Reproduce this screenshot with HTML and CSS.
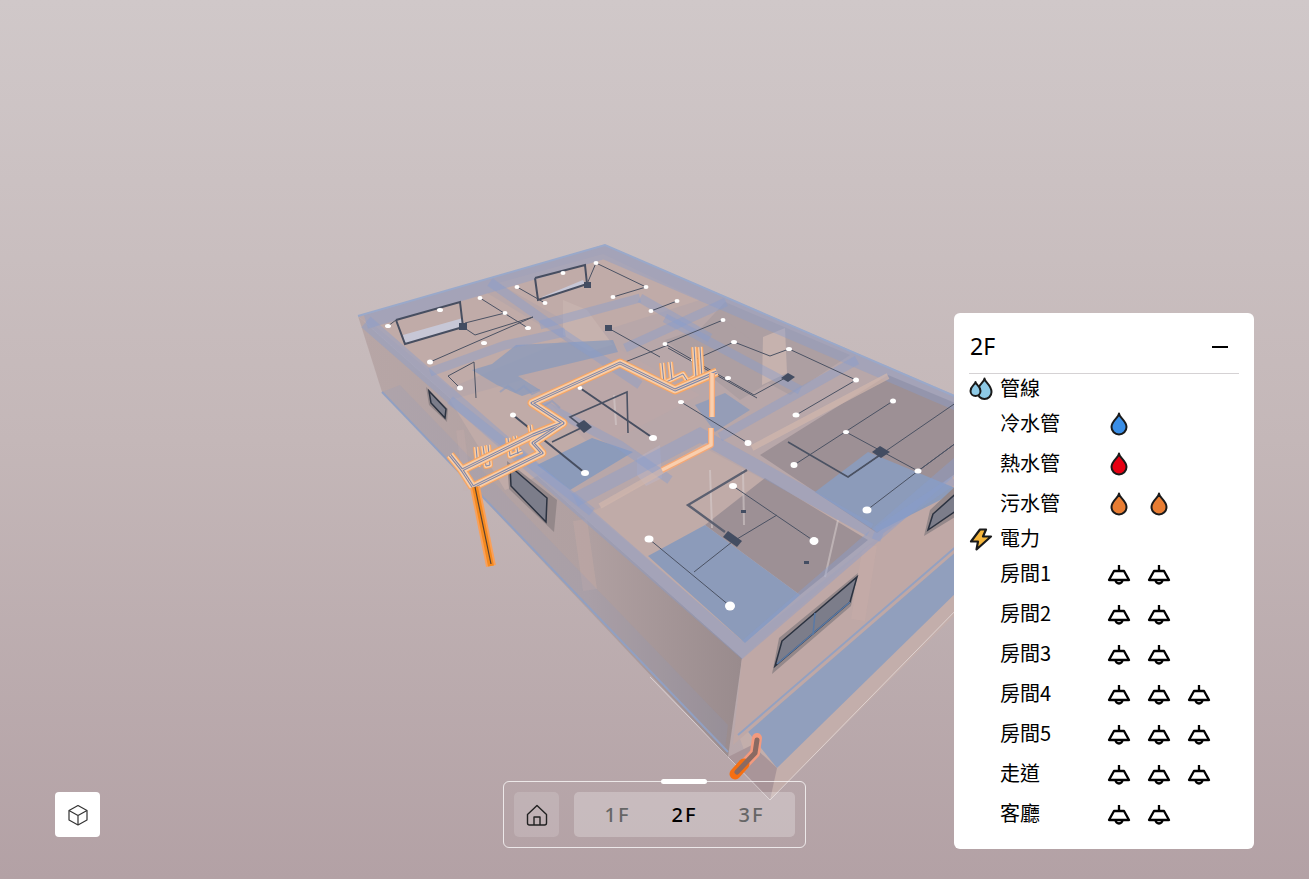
FILE: index.html

```html
<!DOCTYPE html>
<html lang="zh-Hant">
<head>
  <meta charset="UTF-8" />
  <meta name="viewport" content="width=device-width, initial-scale=1.0" />
  <title>2F 管線與電力</title>
  <link rel="stylesheet" href="styles.css">
</head>
<body>
  <svg width="0" height="0" class="defs">
    <defs>
      <linearGradient id="wall-left-fill" x1="0" y1="0" x2="1" y2="0">
        <stop offset="0" stop-color="#b7a6a6"/>
        <stop offset="0.6" stop-color="#b0a0a1"/>
        <stop offset="1" stop-color="#998b8d"/>
      </linearGradient>
      <g id="pipe-main">
        <polyline points="450,455 462,470 533,435 563,423 532,403 620,363 675,390 717,372"/>
        <polyline points="473,487 542,453 533,443 563,423"/>
        <polyline points="462,470 473,487"/>
      </g>
      <g id="pipe-risers">
        <polyline points="476,447 478,467"/>
        <polyline points="483,446 486,466 490,465 488,445"/>
        <polyline points="508,438 510,456 522,451"/>
        <polyline points="515,436 518,454"/>
        <polyline points="530,425 533,443"/>
        <polyline points="662,363 664,383 683,374 690,385"/>
        <polyline points="670,362 672,380"/>
        <polyline points="694,347 696,378"/>
        <polyline points="700,347 702,378"/>
        <polyline points="672,390 697,376"/>
      </g>
      <g id="pipe-right">
        <polyline points="712,373 712,417"/>
        <polyline points="711,428 711,445 662,470"/>
      </g>
    </defs>
    <symbol id="drop" viewBox="0 0 18 24">
      <path d="M9 1.500C9 5.500 16.500 8.500 16.500 15a7.500 7.500 0 0 1-15 0C1.500 8.500 9 5.500 9 1.500z" stroke="#1a1a1a" stroke-width="2" stroke-linejoin="round"/>
    </symbol>
    <symbol id="lamp" viewBox="0 0 24 21">
      <path d="M12 1v6M7 7h10l5 9H2zM8.500 16a3.500 3.500 0 0 0 7 0" fill="none" stroke="#000" stroke-width="2.300" stroke-linejoin="round"/>
    </symbol>
  </svg>

  <div class="viewer">
    <svg class="scene" viewBox="0 0 1309 879" width="1309" height="879">
      <!-- ground around the building -->
      <polygon class="g-pink" points="735,725 1010,500 1010,560 770,800 752,772"/>
      <polygon class="g-blue" points="745,728 1010,500 1010,540 777,768"/>
      <polygon class="g-dark" points="728,757 752,745 777,768 770,800"/>
      <polyline class="g-line" points="650,677 770,800 1010,555"/>

      <!-- outer walls -->
      <polygon class="wall-left" points="358,316 382,392 728,757 742,658"/>
      <polygon class="wall-right" points="742,658 733,745 1010,505 1010,415"/>
      <polyline class="edge-blue" points="382,392 728,752"/>
      <polyline class="edge-blue" points="738,735 1010,500"/>
      <line class="wall-strip" x1="580" y1="520" x2="590" y2="590"/>
      <line class="wall-strip2" x1="460" y1="430" x2="468" y2="490"/>
      <line class="wall-strip" x1="870" y1="545" x2="858" y2="620"/>
      <polygon class="wall-band" points="382,392 725,750 728,725 400,385"/>

      <!-- top of the model -->
      <polygon class="top" points="358,316 605,245 1010,420 742,658"/>

      <!-- room floors -->
      <polygon class="f-pink" points="375,326 487,293 565,340 450,388"/>
      <polygon class="f-pink" points="498,283 603,254 700,300 590,335"/>
      <polygon class="f-pale" points="563,300 587,310 613,345 590,352 563,335"/>
      <polygon class="f-pink" points="450,400 540,375 620,430 530,480 505,490"/>
      <polygon class="f-pink2" points="520,372 612,345 700,395 595,450"/>
      <polygon class="f-grey" points="725,302 850,355 790,395 690,340"/>
      <polygon class="f-grey" points="665,340 725,320 790,370 740,400"/>
      <polygon class="f-pale" points="763,337 785,328 787,373 762,385"/>
      <polygon class="f-pink" points="592,512 705,448 875,540 745,643"/>
      <polygon class="f-grey2" points="705,525 765,478 868,540 800,595"/>
      <polygon class="f-blue" points="648,556 705,525 800,595 745,643"/>
      <polygon class="f-grey2" points="760,455 888,375 960,405 960,470 877,533"/>
      <polygon class="f-blue" points="815,492 868,452 960,490 877,532"/>
      <polygon class="f-blue" points="537,465 592,438 633,452 570,490"/>
      <polygon class="f-blue soft" points="472,370 492,364 516,345 613,340 618,352 518,376 540,390 522,396 497,385"/>
      <polygon class="f-blue soft" points="695,405 725,393 750,410 715,432"/>
      <polygon class="f-light" points="403,335 463,318 463,327 405,344"/>
      <polygon class="f-light" points="542,297 583,280 585,284 541,300"/>

      <!-- stairs and pale partitions seen through the walls -->
      <polyline class="stairs" points="500,392 508,386 516,392 524,386 532,394 540,390"/>
      <polyline class="stairs" points="528,405 536,400 544,406 552,401 560,408"/>
      <polygon class="pale-col" points="637,458 660,445 662,478 646,486 637,475"/>
      <line class="pale-line" x1="710" y1="470" x2="712" y2="528"/>
      <line class="pale-line" x1="743" y1="470" x2="744" y2="525"/>
      <line class="pale-line" x1="838" y1="520" x2="825" y2="577"/>
      <line class="pale-line" x1="614" y1="395" x2="616" y2="425"/>

      <!-- translucent wall tops -->
      <g class="walls">
        <polyline class="w14" points="366,322 604,252 960,405"/>
        <polyline class="w14" points="366,322 742,650 960,462"/>
        <polyline class="w10" points="490,282 565,335 640,385"/>
        <polyline class="w10" points="430,372 505,345 565,332"/>
        <polyline class="w10" points="540,325 640,298"/>
        <polyline class="w10" points="640,298 710,338"/>
        <polyline class="w10" points="625,348 726,302"/>
        <polyline class="w10" points="665,318 800,390"/>
        <polyline class="w14" points="575,500 700,435 870,530"/>
        <polyline class="w10" points="720,437 857,360"/>
        <polyline class="w10" points="450,400 592,512"/>
        <polyline class="w10" points="876,540 880,530 954,480"/>
        <polyline class="w10" points="535,400 620,445 670,480"/>
      </g>
      <polyline class="w-pink" points="600,506 708,445"/>
      <polyline class="w-pink" points="752,448 888,376"/>
      <polyline class="edge-out" points="358,316 605,245 1010,420"/>

      <!-- windows -->
      <polygon class="win-reveal" points="426,387 448,409 447,422 429,405"/>
      <polygon class="win-pane" points="429,391 446,409 445,418 431,403"/>
      <polygon class="win-reveal" points="507,461 557,500 554,532 509,489"/>
      <polygon class="win-pane" points="510,466 547,498 546,522 511,486"/>
      <polygon class="win-reveal" points="779,638 858,573 851,606 772,674"/>
      <polygon class="win-pane" points="782,641 857,577 850,602 775,666"/>
      <line class="win-bar" x1="815" y1="613" x2="813" y2="635"/>
      <line class="win-bar" x1="777" y1="664" x2="850" y2="602"/>
      <polygon class="win-reveal" points="930,510 960,482 960,514 924,536"/>
      <polygon class="win-pane" points="933,514 960,490 960,508 928,530"/>

      <!-- wiring -->
      <g class="wires">
        <polyline class="w-thick" points="396,320 460,302 463,327 405,344 396,320"/>
        <polyline class="w-thick" points="535,278 585,265 587,284 538,300 535,278"/>
        <polyline points="430,362 533,317"/>
        <polyline points="463,327 475,335 533,317"/>
        <polyline points="465,323 505,313"/>
        <polyline points="480,298 528,328"/>
        <polyline points="388,326 396,320"/>
        <polyline points="460,388 448,376 474,362 476,398"/>
        <polyline points="517,287 545,303"/>
        <polyline points="587,284 596,263 646,287 613,297"/>
        <polyline points="608,328 660,357"/>
        <polyline points="620,364 668,345"/>
        <polyline class="w-thick" points="580,388 653,438"/>
        <polyline class="w-thick" points="513,415 585,473"/>
        <polyline class="w-mid" points="552,442 583,427 570,417 627,392 628,433"/>
        <polyline points="677,301 651,311"/>
        <polyline points="723,320 665,344 754,395 787,377"/>
        <polyline points="668,348 757,398"/>
        <polyline points="694,360 734,342 770,356 789,349 856,380 796,415"/>
        <polyline points="681,402 748,443"/>
        <polyline points="893,401 794,465"/>
        <polyline points="846,432 918,471 960,440"/>
        <polyline class="w-mid" points="788,442 848,477 880,455"/>
        <polyline points="848,477 960,400"/>
        <polyline points="733,486 814,541"/>
        <polyline points="649,539 730,606"/>
        <polyline points="694,572 732,542 777,515"/>
        <polyline points="867,510 918,471 960,440"/>
        <polyline class="w-double" points="725,532 688,505 747,470"/>
      </g>
      <g class="boxes">
        <rect x="459" y="323" width="8" height="7"/>
        <rect x="584" y="282" width="7" height="6"/>
        <rect x="605" y="325" width="7" height="6"/>
        <polygon points="576,425 584,420 592,427 584,433"/>
        <polygon points="781,378 788,373 795,377 788,382"/>
        <polygon points="872,452 880,446 890,452 881,458"/>
        <polygon points="723,537 728,531 742,541 737,547"/>
        <rect x="804" y="561" width="5" height="3"/>
        <rect x="741" y="510" width="5" height="3"/>
      </g>
      <g class="dots">
        <ellipse cx="388" cy="326" rx="3" ry="2"/><ellipse cx="440" cy="310" rx="3" ry="2"/>
        <ellipse cx="480" cy="298" rx="2.5" ry="2"/><ellipse cx="505" cy="313" rx="2.5" ry="2"/>
        <ellipse cx="528" cy="328" rx="3" ry="2"/><ellipse cx="484" cy="343" rx="3" ry="2"/>
        <ellipse cx="430" cy="362" rx="3" ry="2.5"/><ellipse cx="460" cy="388" rx="3" ry="2.5"/>
        <ellipse cx="517" cy="287" rx="2.5" ry="2"/><ellipse cx="545" cy="303" rx="2.5" ry="2"/>
        <ellipse cx="563" cy="273" rx="2.5" ry="2"/><ellipse cx="596" cy="263" rx="2.5" ry="2"/>
        <ellipse cx="646" cy="287" rx="2.5" ry="2"/><ellipse cx="613" cy="297" rx="2.5" ry="2"/>
        <ellipse cx="651" cy="311" rx="2.5" ry="2"/><ellipse cx="677" cy="301" rx="2.5" ry="2"/>
        <ellipse cx="620" cy="364" rx="3" ry="2.5"/><ellipse cx="580" cy="388" rx="2.5" ry="2"/>
        <ellipse cx="513" cy="415" rx="3" ry="2.5"/><ellipse cx="585" cy="473" rx="4" ry="3"/>
        <ellipse cx="653" cy="438" rx="4" ry="3"/><ellipse cx="723" cy="320" rx="2.5" ry="2"/>
        <ellipse cx="665" cy="344" rx="2.5" ry="2"/><ellipse cx="734" cy="342" rx="3" ry="2"/>
        <ellipse cx="789" cy="349" rx="3" ry="2"/><ellipse cx="856" cy="380" rx="3" ry="2.5"/>
        <ellipse cx="796" cy="415" rx="3.5" ry="2.5"/><ellipse cx="728" cy="378" rx="3" ry="2"/>
        <ellipse cx="694" cy="360" rx="3" ry="2"/><ellipse cx="681" cy="402" rx="3" ry="2"/>
        <ellipse cx="748" cy="443" rx="3.5" ry="3"/><ellipse cx="893" cy="401" rx="3" ry="2.5"/>
        <ellipse cx="846" cy="432" rx="3" ry="2"/><ellipse cx="794" cy="465" rx="3.5" ry="3"/>
        <ellipse cx="918" cy="471" rx="3.5" ry="2.5"/><ellipse cx="733" cy="486" rx="4" ry="3"/>
        <ellipse cx="814" cy="541" rx="4.5" ry="4"/><ellipse cx="867" cy="510" rx="4.5" ry="3.5"/>
        <ellipse cx="730" cy="606" rx="5" ry="4.5"/><ellipse cx="649" cy="539" rx="4.5" ry="3.5"/>
      </g>

      <!-- highlighted waste pipes -->
      <g class="pipes">
        <use href="#pipe-risers" class="r-glow"/>
        <use href="#pipe-risers" class="r-core"/>
        <use href="#pipe-risers" class="r-line"/>
        <use href="#pipe-main" class="p-glow"/>
        <use href="#pipe-main" class="p-core"/>
        <use href="#pipe-main" class="p-line"/>
        <use href="#pipe-main" class="p-mid"/>
        <use href="#pipe-right" class="s-glow"/>
        <use href="#pipe-right" class="s-core"/>
        <polyline class="d-glow" points="475,487 491,566"/>
        <polyline class="d-deep" points="475,487 491,566"/>
        <polyline class="d-dark" points="475,487 491,564"/>
        <polyline class="t-glow" points="757,738 755,753 735,774"/>
        <polyline class="t-deep" points="744,764 735,774"/>
        <polyline class="t-core" points="757,740 755,753 737,772"/>
      </g>
    </svg>

    <button class="view-btn" type="button" aria-label="3D">
      <svg viewBox="0 0 24 24" width="24" height="24" fill="none" stroke="#333" stroke-width="1.2" stroke-linejoin="round">
        <path d="M12 2.500l9 5v9.500l-9 5-9-5V7.500z"/>
        <path d="M3 7.500l9 5 9-5M12 12.500V22"/>
      </svg>
    </button>

    <div class="floor-bar">
      <span class="bar-handle"></span>
      <button class="home-btn" type="button" aria-label="Home">
        <svg viewBox="0 0 24 24" width="24" height="24" fill="none" stroke="#222" stroke-width="1.4" stroke-linejoin="round">
          <path d="M2.500 11.500L12 2.500l9.500 9v8.500a2 2 0 0 1-2 2h-15a2 2 0 0 1-2-2z"/>
          <path d="M9 22v-8h6v8"/>
        </svg>
      </button>
      <div class="floors">
        <span class="floor">1F</span>
        <span class="floor active">2F</span>
        <span class="floor">3F</span>
      </div>
    </div>

    <aside class="panel">
      <header class="panel-head">
        <span class="panel-title">2F</span>
        <span class="minimize"></span>
      </header>

      <div class="group">
        <svg class="group-icon" viewBox="0 0 24 24" width="24" height="24" stroke="#1a1a1a" stroke-width="2" stroke-linejoin="round">
          <path fill="#8ecae6" d="M15.500 1.500c0 3.500 7 6.500 7 13.500a7 7 0 0 1-14 0c0-7 7-10 7-13.500z"/>
          <path fill="#8ecae6" d="M6.500 5c0 2.500 5 4 5 9a5 5 0 0 1-10 0c0-5 5-6.500 5-9z"/>
        </svg>
        <span class="label">管線</span>
      </div>
      <div class="row pipe-row"><span class="label">冷水管</span><svg class="drop cold"><use href="#drop"/></svg></div>
      <div class="row pipe-row"><span class="label">熱水管</span><svg class="drop hot"><use href="#drop"/></svg></div>
      <div class="row pipe-row"><span class="label">污水管</span><svg class="drop waste"><use href="#drop"/></svg><svg class="drop waste"><use href="#drop"/></svg></div>

      <div class="group">
        <svg class="group-icon" viewBox="0 0 24 24" width="24" height="24" fill="#f6b73c" stroke="#1a1a1a" stroke-width="2.2" stroke-linejoin="round">
          <path d="M17 2.500H11L2 14.500h7L7.500 22.500 22 9.500h-8z"/>
        </svg>
        <span class="label">電力</span>
      </div>
      <div class="row"><span class="label">房間1</span><svg class="lamp"><use href="#lamp"/></svg><svg class="lamp"><use href="#lamp"/></svg></div>
      <div class="row"><span class="label">房間2</span><svg class="lamp"><use href="#lamp"/></svg><svg class="lamp"><use href="#lamp"/></svg></div>
      <div class="row"><span class="label">房間3</span><svg class="lamp"><use href="#lamp"/></svg><svg class="lamp"><use href="#lamp"/></svg></div>
      <div class="row"><span class="label">房間4</span><svg class="lamp"><use href="#lamp"/></svg><svg class="lamp"><use href="#lamp"/></svg><svg class="lamp"><use href="#lamp"/></svg></div>
      <div class="row"><span class="label">房間5</span><svg class="lamp"><use href="#lamp"/></svg><svg class="lamp"><use href="#lamp"/></svg><svg class="lamp"><use href="#lamp"/></svg></div>
      <div class="row"><span class="label">走道</span><svg class="lamp"><use href="#lamp"/></svg><svg class="lamp"><use href="#lamp"/></svg><svg class="lamp"><use href="#lamp"/></svg></div>
      <div class="row"><span class="label">客廳</span><svg class="lamp"><use href="#lamp"/></svg><svg class="lamp"><use href="#lamp"/></svg></div>
    </aside>
  </div>
</body>
</html>
```

FILE: styles.css

```css
* {
  box-sizing: border-box;
}

body {
  margin: 0;
  font-family: "Noto Sans CJK TC", "Noto Sans", sans-serif;
  overflow: hidden;
}

button {
  border: none;
  padding: 0;
  cursor: pointer;
}

.defs {
  position: absolute;
}

.viewer {
  position: relative;
  width: 1309px;
  height: 879px;
  overflow: hidden;
  background: linear-gradient(180deg, #d0c8c9 0%, #c4b7b8 50%, #b3a1a5 100%);
}

.scene {
  position: absolute;
  left: 0;
  top: 0;
  display: block;
  filter: blur(0.4px);
}

/* ground */
.g-pink { fill: #c3aeab; }
.g-blue { fill: #919fbd; }
.g-dark { fill: #a99599; }
.g-line { fill: none; stroke: rgba(255, 255, 255, 0.45); stroke-width: 1; }

/* outer walls */
.wall-left { fill: url(#wall-left-fill); }
.wall-right { fill: #bfa8a6; }
.wall-band { fill: rgba(140, 155, 195, 0.18); }
.wall-strip { stroke: rgba(205, 175, 170, 0.3); stroke-width: 14; }
.wall-strip2 { stroke: rgba(205, 175, 170, 0.25); stroke-width: 8; }
.edge-blue { fill: none; stroke: #93a1c2; stroke-width: 2; }
.edge-out { fill: none; stroke: #9aa9ca; stroke-width: 2; }

/* floors */
.top { fill: #b8a7a9; }
.f-pink { fill: #c0aba8; }
.f-pink2 { fill: #bba7a8; }
.f-pale { fill: #c6b2ae; }
.f-grey { fill: #ad9fa2; }
.f-grey2 { fill: #9d9095; }
.f-blue { fill: #8c9bba; }
.f-blue.soft { opacity: 0.8; }
.f-light { fill: #c7c7d6; }
.stairs { fill: none; stroke: rgba(140, 155, 190, 0.6); stroke-width: 2; }
.pale-col { fill: rgba(190, 190, 215, 0.3); }
.pale-line { stroke: rgba(215, 205, 205, 0.55); stroke-width: 2; }

/* translucent wall tops */
.walls polyline {
  fill: none;
  stroke: rgba(137, 158, 204, 0.42);
  stroke-linejoin: miter;
}
.w14 { stroke-width: 14; }
.w10 { stroke-width: 9; }
.w-pink { fill: none; stroke: rgba(210, 182, 172, 0.7); stroke-width: 6; }

/* windows */
.win-reveal { fill: #94888a; }
.win-pane { fill: #7c7d8a; stroke: #2b3240; stroke-width: 1.5; }
.win-bar { stroke: #5a7aa6; stroke-width: 1.5; }

/* wiring */
.wires polyline {
  fill: none;
  stroke: #4b5263;
  stroke-width: 1;
}
.wires .w-thick { stroke: #474e60; stroke-width: 2; }
.wires .w-mid { stroke: #4b5263; stroke-width: 1.6; }
.wires .w-double { stroke: #5c6070; stroke-width: 2.4; }
.boxes { fill: #434d62; }
.dots { fill: #fff; }

/* pipes: each run is drawn several times, wide glow first */
.pipes polyline { fill: none; stroke-linejoin: round; }
.pipes use { fill: none; stroke-linejoin: round; }
.p-glow { stroke: #f8a662; stroke-width: 9; }
.p-core { stroke: #f9cda6; stroke-width: 6.5; }
.p-line { stroke: #7c88ad; stroke-width: 3; }
.p-mid { stroke: #f3c9a8; stroke-width: 1; }
.r-glow { stroke: #f8a662; stroke-width: 6; }
.r-core { stroke: #f9cda6; stroke-width: 4; }
.r-line { stroke: #7c88ad; stroke-width: 1; }
.s-glow { stroke: #f4a877; stroke-width: 6; }
.s-core { stroke: #f9cfae; stroke-width: 3.5; }
.d-glow { stroke: #f9a05a; stroke-width: 10; }
.d-deep { stroke: #f58a1f; stroke-width: 6; }
.d-dark { stroke: #5a4030; stroke-width: 1.2; }
.t-glow { stroke: #f39a7e; stroke-width: 10; stroke-linecap: round; }
.t-deep { stroke: #f56f12; stroke-width: 11; stroke-linecap: round; }
.t-core { stroke: #8a6a62; stroke-width: 5; stroke-linecap: round; }

/* view button */
.view-btn {
  position: absolute;
  left: 55px;
  top: 792px;
  width: 45px;
  height: 45px;
  background: #fff;
  border-radius: 4px;
  display: flex;
  align-items: center;
  justify-content: center;
}

/* floor switcher */
.floor-bar {
  position: absolute;
  left: 503px;
  top: 781px;
  width: 303px;
  height: 67px;
  padding: 10px;
  display: flex;
  gap: 15px;
  border: 1px solid rgba(255, 255, 255, 0.75);
  border-radius: 6px;
}

.bar-handle {
  position: absolute;
  left: 157px;
  top: -3px;
  width: 46px;
  height: 5px;
  background: #fff;
  border-radius: 3px;
}

.home-btn {
  width: 45px;
  height: 45px;
  flex: none;
  background: rgba(255, 255, 255, 0.15);
  border-radius: 5px;
  display: flex;
  align-items: center;
  justify-content: center;
}

.floors {
  flex: 1;
  display: grid;
  grid-template-columns: repeat(3, 67px);
  justify-content: center;
  align-items: center;
  background: rgba(255, 255, 255, 0.25);
  border-radius: 5px;
}

.floor {
  text-align: center;
  font-family: "Noto Sans", sans-serif;
  font-size: 20px;
  font-weight: 500;
  letter-spacing: 2px;
  color: #666;
}

.floor.active {
  color: #000;
}

/* panel */
.panel {
  position: absolute;
  left: 954px;
  top: 313px;
  width: 300px;
  height: 536px;
  padding: 0 15px;
  background: #fff;
  border-radius: 6px;
  color: #000;
  font-size: 20px;
}

.panel-head {
  height: 61px;
  padding: 8px 11px 0 1px;
  display: flex;
  align-items: center;
  justify-content: space-between;
  border-bottom: 1px solid #d5d2d4;
}

.panel-title {
  font-family: "Noto Sans", sans-serif;
  font-size: 23px;
  line-height: 28px;
  padding-bottom: 2px;
}

.minimize {
  width: 16px;
  height: 2px;
  background: #000;
}

.group {
  height: 30px;
  display: flex;
  align-items: center;
  gap: 7px;
}

.group-icon {
  flex: none;
}

.row {
  height: 40px;
  padding-left: 31px;
  display: flex;
  align-items: center;
}

.label {
  width: 99px;
  flex: none;
  line-height: 28px;
  padding-bottom: 2px;
}

.drop {
  width: 18px;
  height: 24px;
  margin: 0 11px;
}

.drop.cold { fill: #3a8ee6; }
.drop.hot { fill: #e60012; }
.drop.waste { fill: #e87d33; }

.lamp {
  width: 24px;
  height: 21px;
  margin: 0 8px;
}
```
